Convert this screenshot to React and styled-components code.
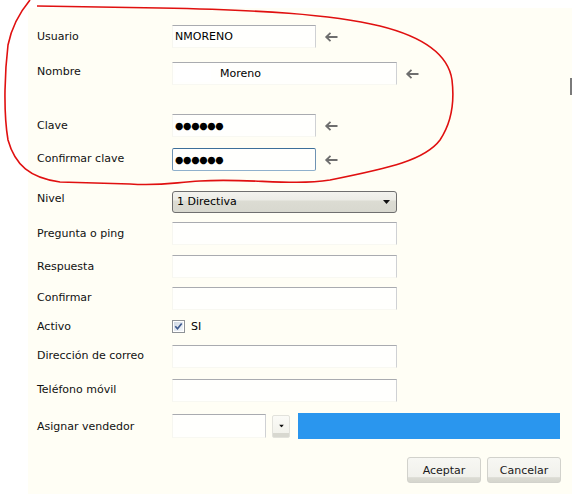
import React from "react";
import styled, { createGlobalStyle } from "styled-components";

const GlobalStyle = createGlobalStyle`
  html, body {
    margin: 0;
    padding: 0;
    background: #ffffff;
  }
  body {
    font-family: "DejaVu Sans", Tahoma, sans-serif;
    font-size: 11px;
    color: #000;
  }
`;

const BackArrow = () => (
  <svg width="14" height="10" viewBox="0 0 14 10">
    <path
      d="M13.5 5H2M6.5 0.8L2.2 5l4.3 4.2"
      fill="none"
      stroke="#6e6e6e"
      strokeWidth="1.8"
    />
  </svg>
);

const Caret = () => (
  <svg width="7" height="4" viewBox="0 0 7 4">
    <path d="M0 0h7L3.5 4z" fill="#111" />
  </svg>
);

const CheckMark = () => (
  <svg width="13" height="13" viewBox="0 0 13 13">
    <defs>
      <linearGradient id="cb" x1="0" y1="0" x2="1" y2="1">
        <stop offset="0" stopColor="#cfd8e4" />
        <stop offset="1" stopColor="#f4f7fb" />
      </linearGradient>
    </defs>
    <rect x="0.5" y="0.5" width="12" height="12" fill="#fff" stroke="#8e9297" />
    <rect x="2" y="2" width="9" height="9" fill="url(#cb)" />
    <path d="M3.3 6.3l2.2 2.4 4.2-5.2" fill="none" stroke="#3f5a8e" strokeWidth="1.7" />
  </svg>
);

const Annotation = () => (
  <Overlay width="572" height="494" viewBox="0 0 572 494">
    <path
      d="M37 6 L160 8 C260 10 330 14 380 26 C420 36 448 52 452 80 C455 105 450 125 440 140
         C425 160 390 168 330 180 C290 186 250 178 200 181 C170 183 160 186 130 184
         L60 182 C30 178 15 165 8 140 C3 110 5 70 8 45 C12 25 20 12 30 0"
      fill="none"
      stroke="#e01010"
      strokeWidth="1.6"
    />
  </Overlay>
);

const App = () => {
  return (
    <Page>
      <GlobalStyle />
      <Panel>
        <Row $gap={0}>
          <Label>Usuario</Label>
          <Field $w={144}>NMORENO</Field>
          <ArrowSlot>
            <BackArrow />
          </ArrowSlot>
        </Row>
        <Row $gap={14}>
          <Label $lift={2}>Nombre</Label>
          <Field $w={225}>
            <Redacted />
            Moreno
          </Field>
          <ArrowSlot>
            <BackArrow />
          </ArrowSlot>
        </Row>
        <Row $gap={29}>
          <Label>Clave</Label>
          <Field $w={144}>
            <Dots>●●●●●●</Dots>
          </Field>
          <ArrowSlot>
            <BackArrow />
          </ArrowSlot>
        </Row>
        <Row $gap={11}>
          <Label $lift={1}>Confirmar clave</Label>
          <Field $w={144} $focused>
            <Dots>●●●●●●</Dots>
          </Field>
          <ArrowSlot>
            <BackArrow />
          </ArrowSlot>
        </Row>
        <Row $gap={19}>
          <Label $lift={3}>Nivel</Label>
          <Select>
            <span>1 Directiva</span>
            <Caret />
          </Select>
        </Row>
        <Row $gap={9}>
          <Label>Pregunta o ping</Label>
          <Field $w={225} />
        </Row>
        <Row $gap={10}>
          <Label>Respuesta</Label>
          <Field $w={225} />
        </Row>
        <Row $gap={9}>
          <Label $lift={1}>Confirmar</Label>
          <Field $w={225} />
        </Row>
        <Row $gap={5}>
          <Label>Activo</Label>
          <Check>
            <CheckMark />
            SI
          </Check>
        </Row>
        <Row $gap={7}>
          <Label $lift={1}>Dirección de correo</Label>
          <Field $w={225} />
        </Row>
        <Row $gap={11}>
          <Label $lift={1}>Teléfono móvil</Label>
          <Field $w={225} />
        </Row>
        <Row $gap={11}>
          <Label>Asignar vendedor</Label>
          <Field $w={94} $h={24} />
          <DropButton>
            <Caret />
          </DropButton>
          <ColorBar />
        </Row>
        <Actions>
          <Button>Aceptar</Button>
          <Button>Cancelar</Button>
        </Actions>
        <Grip />
      </Panel>
      <Annotation />
    </Page>
  );
};

const Page = styled.div`
  position: relative;
  width: 572px;
  height: 494px;
  padding: 8px 0 0 28px;
  box-sizing: border-box;
  overflow: hidden;
`;

const Panel = styled.div`
  position: relative;
  height: 100%;
  background: #fffef5;
  padding: 17px 11px 0 9px;
  box-sizing: border-box;
  display: flex;
  flex-direction: column;
`;

const Row = styled.div`
  display: flex;
  align-items: center;
  min-height: 23px;
  margin-top: ${(p) => p.$gap}px;
`;

const Label = styled.span`
  flex: none;
  width: 135px;
  color: #111;
  margin-bottom: ${(p) => (p.$lift || 0) * 2}px;
`;

const Field = styled.div`
  flex: none;
  display: flex;
  align-items: center;
  box-sizing: border-box;
  width: ${(p) => p.$w}px;
  height: ${(p) => p.$h || 23}px;
  padding-left: 2px;
  background: #fffffd;
  border: 1px solid;
  border-color: ${(p) =>
    p.$focused
      ? "#3d6f99 #6f93b3 #8fb0cc #6f93b3"
      : "#a9abb0 #cfd1d4 #f8f8f2 #f6f6f0"};
  border-radius: ${(p) => (p.$focused ? "2px" : "0")};
  color: #000;
  white-space: nowrap;
`;

const Redacted = styled.span`
  display: inline-block;
  width: 36px;
  height: 16px;
  margin-right: 9px;
  background: #ffffff;
`;

const Dots = styled.span`
  font-size: 9.6px;
  letter-spacing: -0.3px;
  color: #000;
`;

const ArrowSlot = styled.span`
  display: flex;
  margin-left: 8px;
`;

const Select = styled.div`
  flex: none;
  box-sizing: border-box;
  width: 225px;
  height: 22px;
  display: flex;
  align-items: center;
  justify-content: space-between;
  padding: 0 6px 0 4px;
  border: 1px solid #6f6f6f;
  border-radius: 3px;
  background: linear-gradient(#f3f3ee 0%, #ecece6 40%, #dcdcd3 45%, #d8d8cf 100%);
  color: #000;
`;

const Check = styled.label`
  display: flex;
  align-items: center;
  gap: 6px;
  color: #000;
`;

const DropButton = styled.div`
  flex: none;
  box-sizing: border-box;
  width: 18px;
  height: 23px;
  margin-left: 6px;
  display: flex;
  align-items: center;
  justify-content: center;
  border: 1px solid #e2e2dc;
  border-radius: 2px;
  background: linear-gradient(#fbfbf7 0%, #f2f2ec 80%, #d8d8d0 82%, #d8d8d0 100%);

  svg {
    transform: scale(0.7);
  }
`;

const ColorBar = styled.div`
  flex: none;
  width: 262px;
  height: 26px;
  margin-left: 8px;
  background: #2a96ee;
`;

const Actions = styled.div`
  display: flex;
  justify-content: flex-end;
  gap: 6px;
  margin-top: 18px;
`;

const Button = styled.button`
  box-sizing: border-box;
  width: 74px;
  height: 26px;
  padding: 0;
  font-family: "DejaVu Sans", Tahoma, sans-serif;
  font-size: 11px;
  color: #1a1a1a;
  border: 1px solid #d2d2cc;
  border-radius: 3px;
  background: linear-gradient(#f7f7f3 0%, #f1f1ec 78%, #dbdbd3 82%, #d6d6ce 100%);
`;

const Grip = styled.div`
  position: absolute;
  right: -2px;
  top: 70px;
  width: 4px;
  height: 17px;
  background: #7a7a7a;
`;

const Overlay = styled.svg`
  position: absolute;
  left: 0;
  top: 0;
  pointer-events: none;
`;

export default App;
